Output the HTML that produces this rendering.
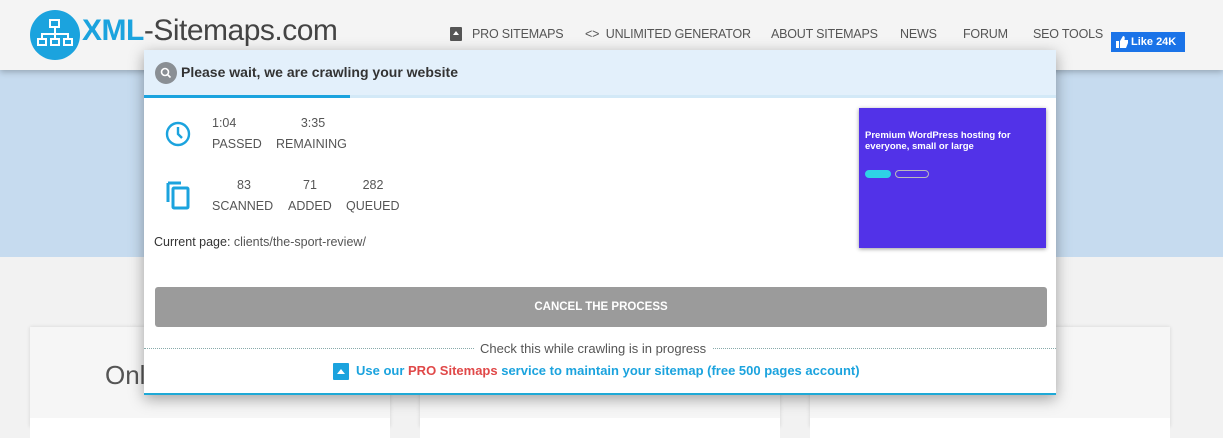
<!DOCTYPE html>
<html><head><meta charset="utf-8"><style>
*{margin:0;padding:0;box-sizing:border-box}
body{width:1223px;height:424px;overflow:hidden;background:#f2f2f2;font-family:"Liberation Sans",sans-serif;position:relative}
.hdr{position:absolute;left:0;top:0;width:1223px;height:70px;background:#f4f4f4;box-shadow:0 2px 6px rgba(0,0,0,.25);z-index:2}
.band{position:absolute;left:0;top:70px;width:1223px;height:187px;background:#c6dbef}
.card{position:absolute;top:327px;width:360px;height:100px;background:#f6f6f6;box-shadow:0 0 4px rgba(0,0,0,.12)}
.card .w{position:absolute;left:0;top:91px;width:100%;height:20px;background:#fff}
.nav{position:absolute;top:27px;font-size:12.5px;color:#555;letter-spacing:-.2px}
.modal{position:absolute;left:144px;top:50px;width:912px;height:345px;background:#fff;z-index:3;box-shadow:0 4px 14px rgba(0,0,0,.35);border-bottom:2px solid #1fa9d6}
.mh{height:45px;background:#e3f0fb;position:relative}
.pb{height:3px;background:#d3e9f7}
.pb div{width:206px;height:3px;background:#1ba3de}
.t{position:absolute;font-size:12.5px;color:#555;text-align:center}
</style></head><body>
<div class="hdr">
 <svg style="position:absolute;left:30px;top:10px" width="50" height="50" viewBox="0 0 50 50"><circle cx="25" cy="25" r="25" fill="#1ba3de"/><g fill="none" stroke="#fff" stroke-width="2"><rect x="20" y="10" width="9" height="7"/><rect x="8" y="29" width="8" height="6"/><rect x="21" y="29" width="8" height="6"/><rect x="34" y="29" width="8" height="6"/><path d="M25 17v12M12 29v-5h26v5"/></g></svg>
 <div style="position:absolute;left:82px;top:14px;font-size:30px;color:#444;letter-spacing:-.5px"><b style="color:#1ba3de">XML</b>-Sitemaps.com</div>
 <svg style="position:absolute;left:450px;top:27px" width="12" height="14"><rect width="12" height="14" rx="1" fill="#555"/><path d="M6 4l3 4H3z" fill="#fff"/></svg>
 <div class="nav" style="left:472px">PRO SITEMAPS</div>
 <div class="nav" style="left:585px">&lt;&gt;&nbsp; UNLIMITED GENERATOR</div>
 <div class="nav" style="left:771px">ABOUT SITEMAPS</div>
 <div class="nav" style="left:900px">NEWS</div>
 <div class="nav" style="left:963px">FORUM</div>
 <div class="nav" style="left:1033px">SEO TOOLS</div>
 <div style="position:absolute;left:1111px;top:32px;width:74px;height:20px;background:#1a73e8;color:#fff;font-size:11px;font-weight:bold;line-height:20px;padding-left:20px">Like 24K<svg style="position:absolute;left:5px;top:4px" width="12" height="12"><path d="M0 5h3v7H0zM4 5l3-5c2 0 2 2 1.5 4H12v3l-2 5H4z" fill="#fff"/></svg></div>
</div>
<div class="band"></div>
<div class="card" style="left:30px"><div class="w"></div><div style="position:absolute;left:75px;top:33px;font-size:26px;color:#555">Onl</div></div>
<div class="card" style="left:420px"><div class="w"></div></div>
<div class="card" style="left:810px"><div class="w"></div></div>
<div class="modal">
 <div class="mh"><svg style="position:absolute;left:11px;top:12px" width="22" height="22"><circle cx="11" cy="11" r="11" fill="#8a8f94"/><circle cx="10" cy="10" r="3.5" fill="none" stroke="#fff" stroke-width="1.6"/><path d="M12.5 12.5l3 3" stroke="#fff" stroke-width="1.6"/></svg><div style="position:absolute;left:37px;top:14px;font-size:14px;font-weight:bold;color:#333">Please wait, we are crawling your website</div></div>
 <div class="pb"><div></div></div>
 <svg style="position:absolute;left:21px;top:71px" width="26" height="26"><circle cx="13" cy="13" r="11" fill="none" stroke="#1ba3de" stroke-width="2.4"/><path d="M13 6v7l4 4" fill="none" stroke="#1ba3de" stroke-width="2.4"/></svg>
 <div class="t" style="left:68px;top:66px">1:04</div><div class="t" style="left:68px;top:87px">PASSED</div>
 <div class="t" style="left:132px;top:66px;width:74px">3:35</div><div class="t" style="left:132px;top:87px">REMAINING</div>
 <svg style="position:absolute;left:22px;top:131px" width="26" height="30"><path d="M2 2h13M2 2v19" fill="none" stroke="#1ba3de" stroke-width="3"/><rect x="7" y="7" width="15" height="20" rx="1" fill="none" stroke="#1ba3de" stroke-width="3"/></svg>
 <div class="t" style="left:68px;top:128px;width:64px">83</div><div class="t" style="left:68px;top:149px">SCANNED</div>
 <div class="t" style="left:144px;top:128px;width:44px">71</div><div class="t" style="left:144px;top:149px">ADDED</div>
 <div class="t" style="left:202px;top:128px;width:54px">282</div><div class="t" style="left:202px;top:149px">QUEUED</div>
 <div class="t" style="left:10px;top:185px;color:#333">Current page: <span style="color:#555">clients/the-sport-review/</span></div>
 <div style="position:absolute;left:715px;top:58px;width:187px;height:140px;background:#5232e8;box-shadow:0 1px 4px rgba(0,0,0,.4);color:#fff">
  <div style="position:absolute;left:6px;top:22px;font-size:9.5px;font-weight:bold;line-height:11px">Premium WordPress hosting for<br>everyone, small or large</div>
  <div style="position:absolute;left:6px;top:62px;width:26px;height:8px;border-radius:4px;background:#2ed3e6"></div>
  <div style="position:absolute;left:36px;top:62px;width:34px;height:8px;border-radius:4px;border:1px solid #bbb"></div>
 </div>
 <div style="position:absolute;left:11px;top:237px;width:892px;height:40px;background:#9b9b9b;border-radius:3px;color:#fff;font-size:11.5px;font-weight:bold;text-align:center;line-height:40px">CANCEL THE PROCESS</div>
 <div style="position:absolute;left:0;top:298px;width:912px;border-top:1px dotted #8aa"></div>
 <div style="position:absolute;left:330px;top:291px;background:#fff;padding:0 6px;font-size:13px;color:#555">Check this while crawling is in progress</div>
 <svg style="position:absolute;left:189px;top:313px" width="16" height="17"><rect width="16" height="17" rx="1" fill="#1ba3de"/><path d="M8 6l4 5H4z" fill="#fff"/></svg>
 <div style="position:absolute;left:212px;top:313px;font-size:13px;font-weight:bold;color:#1ba3de">Use our <span style="color:#e04848">PRO Sitemaps</span> service to maintain your sitemap (free 500 pages account)</div>
</div>
</body></html>
